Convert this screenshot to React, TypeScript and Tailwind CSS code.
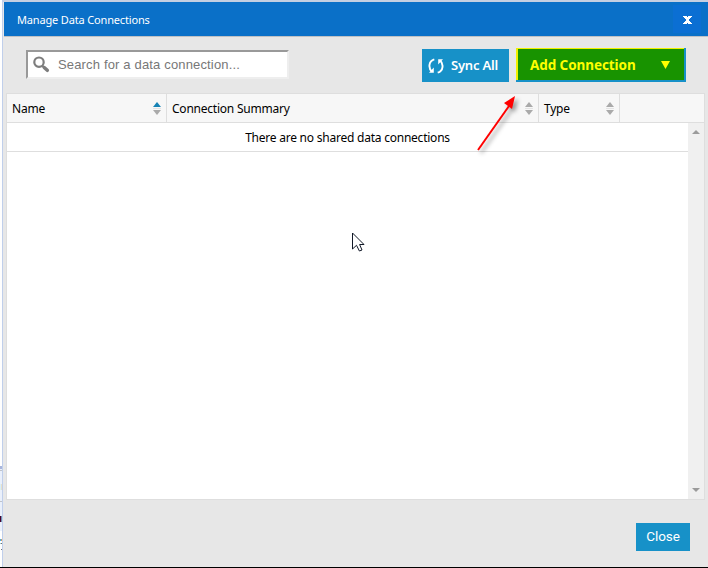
import React from "react";

function SortArrows({ active = false }: { active?: boolean }) {
  return (
    <svg width="8" height="13" viewBox="0 0 8 13" className="shrink-0">
      <path d="M4 0 8 5H0Z" fill={active ? "#1683b5" : "#aaa"} />
      <path d="M0 8H8L4 13Z" fill="#aaa" />
      <path d="M0 6.5H8" stroke="#e3e3e3" />
    </svg>
  );
}

function HeaderCell({ label, width, active }: { label: string; width: string; active?: boolean }) {
  return (
    <div className={`flex items-center justify-between border-r border-[#dedede] pl-[5px] pr-[5px] ${width}`}>
      <span className="relative top-px">{label}</span>
      <SortArrows active={active} />
    </div>
  );
}

function PageEdge() {
  return (
    <div className="flex h-full w-[2px] shrink-0 flex-col bg-white">
      <div className="h-[466px]" />
      <div className="h-[3px] bg-[#a9b6dc]" />
      <div className="h-px bg-[#eaf0fb]" />
      <div className="h-px bg-[#bfc3ca]" />
      <div className="h-[13px] bg-[#eaf0fb]" />
      <div className="h-[6px] bg-[linear-gradient(90deg,#d8eff8_50%,#e8dfca_50%)]" />
      <div className="h-[11px] bg-[#eaf0fb]" />
      <div className="h-px bg-[#bfc3ca]" />
      <div className="h-[14px] bg-[#eaf0fb]" />
      <div className="h-[6px] bg-[linear-gradient(90deg,#4d0030_50%,#6d92ad_50%)]" />
      <div className="h-[9px] bg-[#eaf0fb]" />
      <div className="h-[8px]" />
      <div className="h-[2px] bg-[linear-gradient(90deg,#43b4ef_50%,#d49a60_50%)]" />
      <div className="h-[2px]" />
      <div className="h-px bg-[linear-gradient(90deg,#9cc_50%,#6f6f6f_50%)]" />
      <div className="h-[5px]" />
      <div className="h-px bg-[linear-gradient(90deg,#fff_50%,#777_50%)]" />
    </div>
  );
}

export default function App() {
  return (
    <div className="relative flex h-[568px] w-[708px] overflow-hidden border-b border-black bg-[#e7e7e7] font-['Noto_Sans','Open_Sans',sans-serif] text-black">
      <PageEdge />
      <div className="flex min-w-0 flex-1 flex-col border-l border-[#c0cfeb]">
        <div className="h-[2px] bg-[#c4cfe2]" />
        <header className="ml-px flex h-[35px] items-center justify-between border-b border-[#bfc1c5] bg-[#0a70c8] pl-[13px] pr-[7px] text-white">
          <span className="relative top-px text-[11px] tracking-[-0.16px]">Manage Data Connections</span>
          <button className="flex h-7 w-7 items-center justify-center bg-[#0b6fd3]">
            <svg width="9" height="8" viewBox="0 0 9 8" shapeRendering="crispEdges" className="relative top-px">
              <path d="M0 0H4V1H5V0H9V1H8V2H7V3H6V5H7V6H8V7H9V8H5V7H4V8H0V7H1V6H2V5H3V3H2V2H1V1H0Z" fill="white" />
            </svg>
          </button>
        </header>

        <div className="flex h-[56px] items-start pl-[23px] pr-[22px] pt-[12px]">
          <label className="mt-px flex h-[29px] w-[263px] items-center border-2 border-b-[#eee] border-l-[#999] border-r-[#eee] border-t-[#999] bg-white pl-[5px]">
            <svg width="17" height="17" viewBox="0 0 17 17" fill="none" stroke="#7d7d7d">
              <circle cx="6" cy="6.2" r="4.7" strokeWidth="2.2" />
              <path d="m9.3 9.8 1.8 1.6" strokeWidth="2.2" />
              <path d="m11.2 11.5 3.1 2.8" strokeWidth="3.5" strokeLinecap="round" />
            </svg>
            <span className="ml-[8px] font-['Liberation_Sans',sans-serif] text-[13px] tracking-[0.16px] text-[#777]">Search for a data connection...</span>
          </label>
          <button className="ml-auto flex h-[33px] w-[87px] items-center bg-[#1791c8] pl-[6px] text-[13px] font-semibold text-white">
            <svg width="16" height="16" viewBox="0 0 16 16" fill="none" stroke="white" strokeWidth="1.9">
              <path d="M6.3 1.3C.4 3 .2 10.5 4 13.5M9.7 14.7C15.6 13 15.8 5.5 12 2.5" />
              <path d="M5.8 9.6V14.8H1ZM10.2 6.4V1.2H15Z" fill="white" stroke="none" />
            </svg>
            <span className="ml-[7px] whitespace-nowrap tracking-[-0.2px]">Sync All</span>
          </button>
          <button className="-mt-px ml-[7px] h-[34px] w-[170px] border-b-2 border-r-2 border-[#1791c8]">
            <span className="flex h-full items-center justify-between border-l-2 border-t border-[#f1f100] bg-[#189300] pl-[12px] pr-[14px] text-[13.5px] font-bold text-[#ffff00]">
              <span className="relative top-px tracking-[-0.08px]">Add Connection</span>
              <svg width="9" height="8" viewBox="0 0 9 8"><path d="M0 0H9L4.5 8Z" fill="#ff0" /></svg>
            </span>
          </button>
        </div>

        <main className="ml-[3px] mr-[3px] flex h-[407px] flex-col border border-[#dedede] bg-white text-[12px] tracking-[-0.23px]">
          <div className="flex h-[29px] shrink-0 border-b border-[#dedede] bg-[#f7f7f7]">
            <HeaderCell label="Name" width="w-[160px]" active />
            <HeaderCell label="Connection Summary" width="w-[372px]" />
            <HeaderCell label="Type" width="w-[81px]" />
          </div>
          <div className="flex min-h-0 flex-1">
            <div className="flex-1">
              <div className="flex h-[29px] items-center justify-center border-b border-[#dedede]">
                <span className="relative top-px">There are no shared data connections</span>
              </div>
            </div>
            <div className="flex w-[16px] flex-col items-center justify-between bg-[#f0f0f0] pb-[7px] pt-[7px]">
              <svg width="8" height="5" viewBox="0 0 8 5"><path d="M4 0 8 4H0Z" fill="#9b9b9b" /></svg>
              <svg width="8" height="5" viewBox="0 0 8 5"><path d="M0 1H8L4 5Z" fill="#9b9b9b" /></svg>
            </div>
          </div>
        </main>

        <footer className="flex justify-end pr-[18px] pt-[23px]">
          <button className="h-[28px] w-[54px] bg-[#1791c8] pb-px font-['Roboto',sans-serif] text-[13.5px] tracking-[-0.05px] text-white">Close</button>
        </footer>
      </div>

      <svg className="absolute left-[470px] top-[90px] overflow-visible" width="52" height="66" viewBox="0 0 52 66">
        <g className="[filter:drop-shadow(3px_3px_2px_rgba(0,0,0,0.4))]">
          <path d="M8 60 39 16" stroke="#f00" strokeWidth="2" />
          <path d="M45 6 42 19 34 13Z" fill="#f00" />
        </g>
      </svg>
      <svg className="absolute left-[352px] top-[232px]" width="13" height="20" viewBox="0 0 13 20">
        <path d="M.5 1V17L4.5 13.3 7.4 19 10 18 7.6 12.5H12Z" fill="white" stroke="#111827" strokeWidth="1" />
      </svg>
    </div>
  );
}
